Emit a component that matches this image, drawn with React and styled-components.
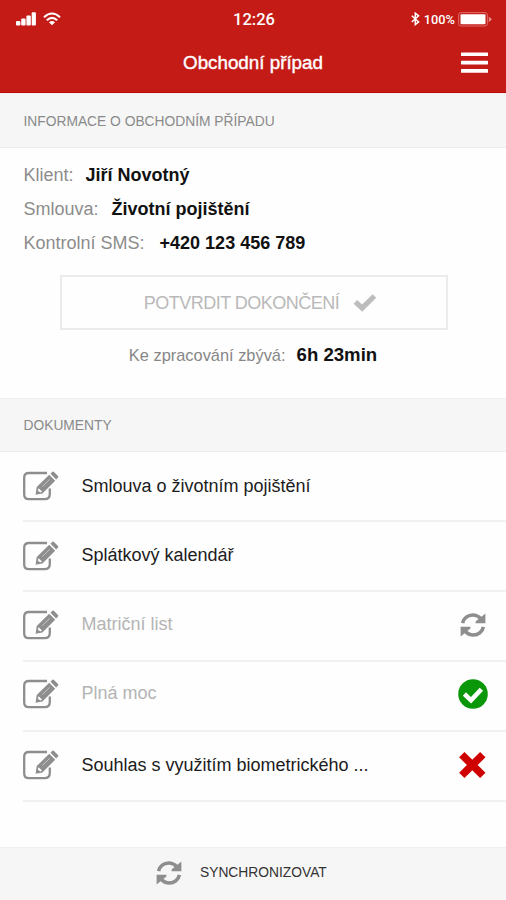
import React from 'react';
import styled, { createGlobalStyle } from 'styled-components';

const info = [
    { label: 'Klient:', value: 'Jiří Novotný', gap: 12 },
    { label: 'Smlouva:', value: 'Životní pojištění', gap: 13 },
    { label: 'Kontrolní SMS:', value: '+420 123 456 789', gap: 15 },
];

const documents = [
    { name: 'Smlouva o životním pojištění', lift: 0 },
    { name: 'Splátkový kalendář', lift: 1 },
    { name: 'Matriční list', muted: true, status: 'sync', lift: 3 },
    { name: 'Plná moc', muted: true, status: 'done', lift: 5 },
    { name: 'Souhlas s využitím biometrického ...', status: 'error', lift: 2 },
];

const SignalIcon = () => (
    <svg width="20" height="14" viewBox="0 0 20 14" fill="#fff">
        <rect x="0" y="9" width="4.4" height="4.5" rx="1" />
        <rect x="5.2" y="6.5" width="4.4" height="7" rx="1" />
        <rect x="10.4" y="3.5" width="4.4" height="10" rx="1" />
        <rect x="15.7" y="0.3" width="4.2" height="13.2" rx="1" />
    </svg>
);

const WifiIcon = () => (
    <svg width="18" height="14" viewBox="0 0 18 14" fill="none" stroke="#fff" strokeWidth="2.1">
        <path d="M1 5.2Q9 -2.2 17 5.2" />
        <path d="M3.8 8.3Q9 3.6 14.2 8.3" />
        <path d="M6 10.3Q9 7.8 12 10.3L9 13.2Z" fill="#fff" stroke="none" />
    </svg>
);

const BluetoothIcon = () => (
    <svg width="9" height="14" viewBox="0 0 9 14" fill="none" stroke="#fff" strokeWidth="1.5">
        <path d="M0.8 3.8L7.6 9.9L4.3 12.6V1.2L7.6 3.9L0.8 10" />
    </svg>
);

const BatteryIcon = () => (
    <svg width="35" height="15" viewBox="0 0 35 15">
        <rect x="0.6" y="0.6" width="28.8" height="13.4" rx="2.5" fill="none" stroke="#dc6f6b" />
        <rect x="2.5" y="2.3" width="25" height="10" rx="1" fill="#fff" />
        <path d="M30.8 4.4L34 7.3L30.8 10.2Z" fill="#e58a86" />
    </svg>
);

const MenuIcon = () => (
    <svg width="27" height="22" viewBox="0 0 27 22" fill="#fff">
        <rect y="0.4" width="27" height="3.7" rx="0.6" />
        <rect y="8.7" width="27" height="3.7" rx="0.6" />
        <rect y="17.1" width="27" height="3.7" rx="0.6" />
    </svg>
);

const CheckIcon = () => (
    <svg width="24" height="20" viewBox="0 0 24 20">
        <path d="M2.4 8.8L9.2 15.2L21.4 3" fill="none" stroke="#bdbdbd" strokeWidth="5.2" />
    </svg>
);

const EditIcon = () => (
    <svg width="36" height="30" viewBox="0 0 36 30" fill="none">
        <path
            d="M24 2H6Q1.2 2 1.2 6.5V23.5Q1.2 28.2 6 28.2H21.5Q26.8 28.2 26.8 23V17.5"
            stroke="#8e8e8e"
            strokeWidth="2.3"
        />
        <path d="M26.2 3.7L32.2 9.7L19.4 22.4L12.6 23.7L13.7 16.1Z" fill="#8e8e8e" />
        <path d="M15.6 17.3L19 20.6L17.2 21.6L14.8 19.4Z" fill="#fff" />
        <path d="M19.3 15.6L26.6 8.4" stroke="#c4c4c4" strokeWidth="1" />
        <path d="M27.5 2.7L29.4 0.8Q30.2 0.2 31 0.9L35 5Q35.7 5.8 35 6.5L33.1 8.4Z" fill="#8e8e8e" />
    </svg>
);

const SyncIcon = () => (
    <svg width="26" height="26" viewBox="0 0 26 26" fill="none">
        <path d="M2.6 11.2C3.6 6 8 3 12.6 3C16.2 3 18.8 4.4 21 7" stroke="#8e8e8e" strokeWidth="3.6" />
        <path d="M23.4 14.8C22.4 20 18 23 13.4 23C9.8 23 7.2 21.6 5 19" stroke="#8e8e8e" strokeWidth="3.6" />
        <path d="M25.4 1.6V11.2H15.6V9.6Z" fill="#8e8e8e" />
        <path d="M0.6 24.4V14.8H10.4V16.4Z" fill="#8e8e8e" />
    </svg>
);

const DoneIcon = () => (
    <svg width="30" height="30" viewBox="0 0 30 30">
        <circle cx="15" cy="15" r="14.8" fill="#0a980a" />
        <path d="M6.4 15L13 21.3L23.4 10.2" fill="none" stroke="#fff" strokeWidth="4.6" />
    </svg>
);

const ErrorIcon = () => (
    <svg width="30" height="28" viewBox="0 0 30 28">
        <path
            d="M3.8 3.6L24.8 24.4M24.8 3.6L3.8 24.4"
            stroke="#cf0000"
            strokeWidth="7.6"
        />
    </svg>
);

const statusIcons = { sync: <SyncIcon />, done: <DoneIcon />, error: <ErrorIcon /> };

const App = () => {
    return (
        <Screen>
            <GlobalStyle />
            <Header>
                <StatusBar>
                    <Signal>
                        <SignalIcon />
                        <WifiIcon />
                    </Signal>
                    <Time>12:26</Time>
                    <Battery>
                        <BluetoothIcon />
                        <span>100%</span>
                        <BatteryIcon />
                    </Battery>
                </StatusBar>
                <TitleBar>
                    <h1>Obchodní případ</h1>
                    <MenuButton aria-label="Menu">
                        <MenuIcon />
                    </MenuButton>
                </TitleBar>
            </Header>
            <SectionTitle $height={55}>INFORMACE O OBCHODNÍM PŘÍPADU</SectionTitle>
            <Info>
                {info.map((item) => (
                    <InfoRow key={item.label} $gap={item.gap}>
                        <span>{item.label}</span>
                        <b>{item.value}</b>
                    </InfoRow>
                ))}
                <ConfirmButton>
                    <span>POTVRDIT DOKONČENÍ</span>
                    <CheckIcon />
                </ConfirmButton>
                <Remaining>
                    <span>Ke zpracování zbývá:</span>
                    <b>6h 23min</b>
                </Remaining>
            </Info>
            <SectionTitle $height={54}>DOKUMENTY</SectionTitle>
            <Documents>
                {documents.map((doc) => (
                    <DocumentRow key={doc.name} $muted={doc.muted} $lift={doc.lift}>
                        <EditIcon />
                        <p>{doc.name}</p>
                        <Status>{statusIcons[doc.status]}</Status>
                    </DocumentRow>
                ))}
            </Documents>
            <SyncBar>
                <SyncIcon />
                <span>SYNCHRONIZOVAT</span>
            </SyncBar>
        </Screen>
    );
};

const GlobalStyle = createGlobalStyle`
* {
    box-sizing: border-box;
    margin: 0;
    padding: 0;
}
body {
    background: #fff;
    font-family: 'Liberation Sans', Arial, sans-serif;
}
svg {
    display: block;
    flex-shrink: 0;
}
button {
    border: none;
    background: none;
    font-family: inherit;
}
`;
const Screen = styled.div`
    display: flex;
    flex-direction: column;
    height: 900px;
    background: #fefefe;
`;
const Header = styled.header`
    height: 93px;
    background: #c41b17;
    border-bottom: 1px solid #bd0a06;
    color: #fff;
`;
const StatusBar = styled.div`
    display: grid;
    grid-template-columns: 1fr auto 1fr;
    align-items: center;
    height: 38px;
    padding: 0 13px 0 16px;
    font-family: Roboto, sans-serif;
    font-weight: 500;
`;
const Signal = styled.div`
    display: flex;
    gap: 7px;
`;
const Time = styled.span`
    font-size: 16.5px;
    transform: translateX(-0.5px);
`;
const Battery = styled.div`
    display: flex;
    align-items: center;
    justify-content: flex-end;
    span {
        margin: 0 3px 0 4px;
        font-size: 12.8px;
    }
`;
const TitleBar = styled.div`
    display: grid;
    grid-template-columns: 1fr auto 1fr;
    align-items: center;
    height: 49px;
    padding: 0 18px;
    h1 {
        grid-column: 2;
        font-size: 18.8px;
        font-weight: normal;
        -webkit-text-stroke: 0.4px #fff;
    }
`;
const MenuButton = styled.button`
    justify-self: end;
`;
const SectionTitle = styled.h2`
    display: flex;
    align-items: center;
    height: ${(props) => props.$height}px;
    padding: 1px 23px 0 23.5px;
    background: #f6f6f6;
    border-top: 1px solid #f0f0f0;
    border-bottom: 1px solid #ededed;
    color: #8a8a8a;
    font-size: 13.8px;
    font-weight: normal;
`;
const Info = styled.section`
    display: flex;
    flex-direction: column;
    height: 250px;
    padding-top: 10px;
`;
const InfoRow = styled.div`
    display: flex;
    align-items: center;
    gap: ${(props) => props.$gap}px;
    height: 34px;
    padding-left: 23.5px;
    font-size: 18px;
    span {
        color: #8c8c8c;
    }
    b {
        color: #111;
    }
`;
const ConfirmButton = styled.button`
    display: flex;
    align-items: center;
    justify-content: center;
    gap: 14px;
    height: 55px;
    margin: 15px 58px 0 60px;
    padding: 1px 0 0 13px;
    border: 2px solid #ebebeb;
    color: #b9b9b9;
    font-size: 18px;
    letter-spacing: -0.5px;
`;
const Remaining = styled.div`
    display: flex;
    align-items: center;
    justify-content: center;
    gap: 11px;
    height: 50px;
    font-size: 16.4px;
    color: #868686;
    b {
        color: #111;
        font-size: 18.6px;
    }
`;
const Documents = styled.ul`
    flex: 1;
    list-style: none;
`;
const DocumentRow = styled.li`
    display: flex;
    align-items: center;
    height: 70px;
    margin-left: 23px;
    padding-bottom: ${(props) => props.$lift}px;
    border-bottom: 2px solid #f1f1f1;
    color: ${(props) => (props.$muted ? '#b4b4b4' : '#1c1c1c')};
    font-size: 18px;
    p {
        flex: 1;
        margin-left: 22.5px;
    }
`;
const Status = styled.div`
    display: flex;
    justify-content: center;
    width: 30px;
    margin-right: 18px;
`;
const SyncBar = styled.button`
    display: flex;
    align-items: center;
    gap: 18px;
    height: 53px;
    padding: 0 0 3px 156px;
    background: #f6f6f6;
    border-top: 1px solid #efefef;
    color: #333;
    font-size: 13.8px;
`;
export default App;
